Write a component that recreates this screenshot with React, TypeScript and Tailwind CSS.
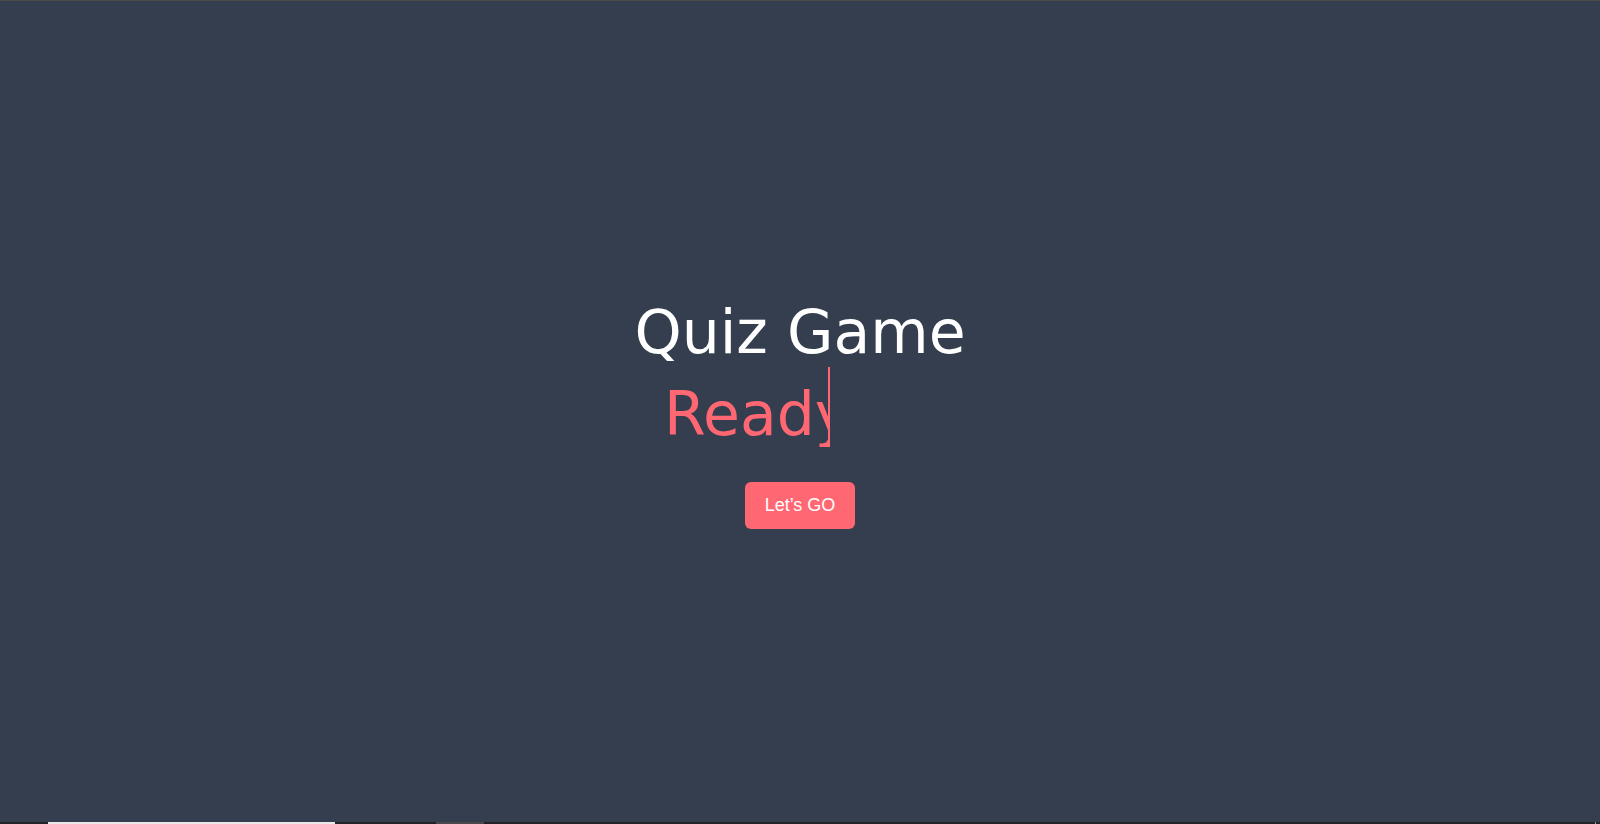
export default function App() {
  return (
    <div className="w-[1600px] h-[824px] flex flex-col bg-[#343e4f] overflow-hidden">
      <div className="h-[1px] w-full bg-[#4b4b4a]" />
      <div className="flex-1 flex flex-col items-center justify-center pt-[8px]">
        <h1
          className="text-[60px] leading-[60px] text-white"
          style={{ fontFamily: '"DejaVu Sans", Verdana, sans-serif' }}
        >
          Quiz Game
        </h1>
        <div className="w-[272px] mt-[5px]">
          <span
            className="inline-block w-[166px] overflow-hidden whitespace-nowrap border-r-2 border-[#ff6773] text-[#ff6773] text-[60px] leading-[60px] pt-[17px] pb-[3px]"
            style={{ fontFamily: '"DejaVu Sans", Verdana, sans-serif' }}
          >
            Ready
          </span>
        </div>
        <button
          className="mt-[29px] h-[47px] px-[20px] rounded-[6px] bg-[#ff6773] text-white text-[18px]"
          style={{ fontFamily: '"Liberation Sans", Arial, sans-serif' }}
        >
          Let’s GO
        </button>
      </div>
      <div className="h-[2px] w-full flex bg-[#232429]">
        <div className="w-[48px]" />
        <div className="w-[287px] bg-[#e8e8e8]" />
        <div className="w-[101px]" />
        <div className="w-[48px] bg-[#4a4a4c]" />
        <div className="flex-1" />
        <div className="w-[1px] bg-[#9a9a9a]" />
        <div className="w-[4px]" />
      </div>
    </div>
  );
}
